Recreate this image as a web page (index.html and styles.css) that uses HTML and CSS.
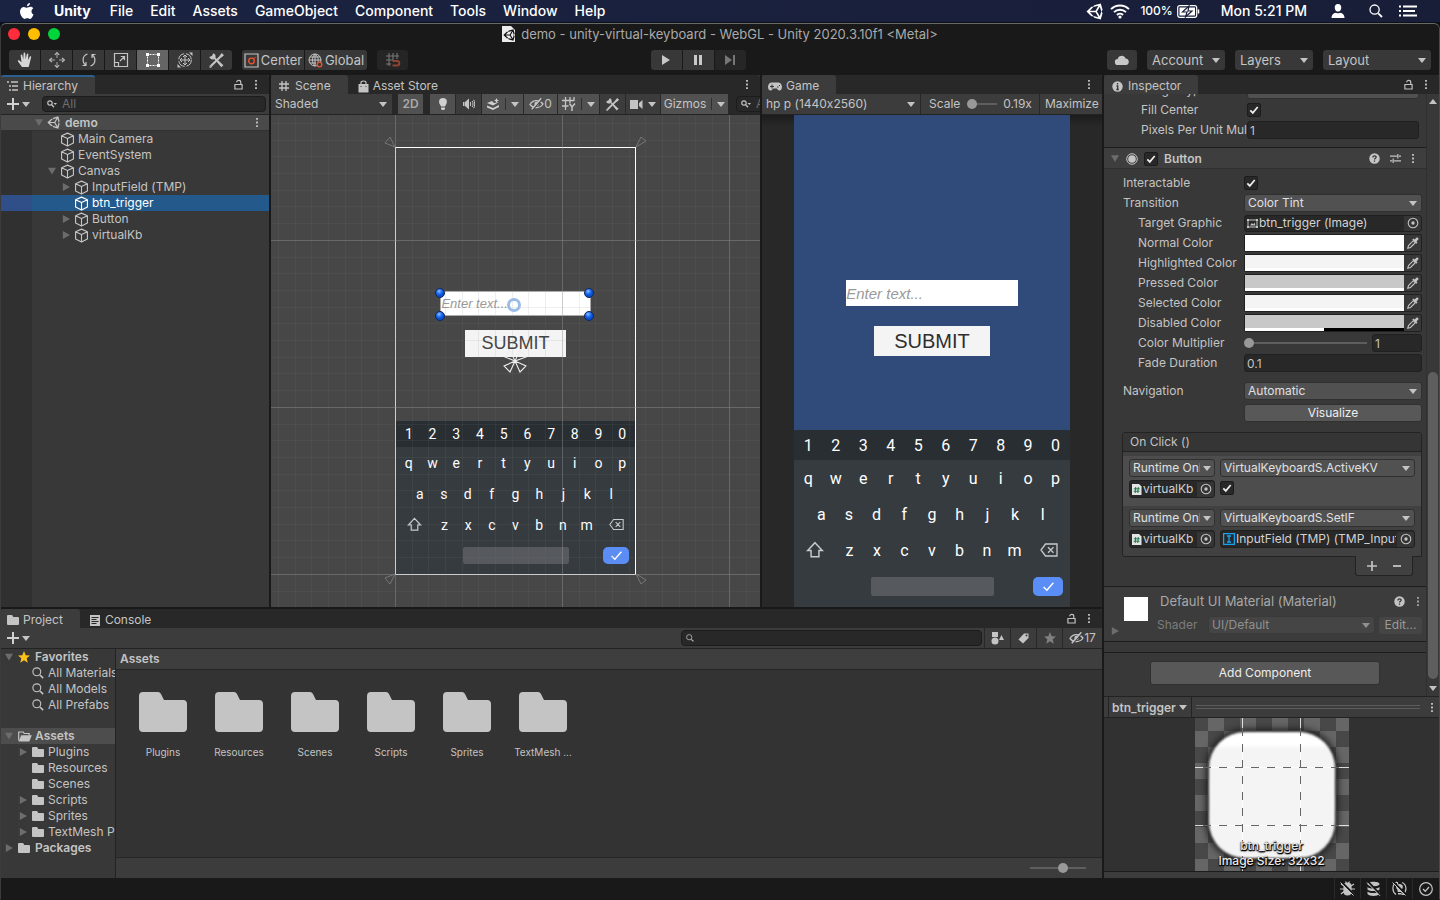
FILE: index.html
```html
<!DOCTYPE html>
<html lang="en">
<head>
<meta charset="utf-8">
<title>demo - unity-virtual-keyboard - WebGL - Unity 2020.3.10f1 &lt;Metal&gt;</title>
<link rel="stylesheet" href="styles.css">
</head>
<body>
<svg class="sprite" aria-hidden="true">
  <symbol id="cube" viewBox="0 0 16 16"><path d="M8 1.200 14.300 4v7.800L8 15 1.700 11.800V4zM1.700 4 8 7l6.300-3M8 7v8" fill="none" stroke="currentColor" stroke-width="1.200" stroke-linejoin="round"/></symbol>
  <symbol id="unity" viewBox="0 0 512 512"><path fill="currentColor" fill-rule="evenodd" d="M498.100 206.400 445.300 14.700 248.200 66.100 219 116.100l-59.200-.4L15.500 256l144.300 140.300 59.200-.4 29.200 50 197.100 51.400 52.800-191.600-30-49.700zM223.800 124.200l150.700-37.700L288 232.300H114.900zM223.800 387.800 114.900 279.700H288l86.500 145.800zM416.800 401.800 330.200 256l86.600-145.800L458.600 256z"/></symbol>
  <symbol id="kebab" viewBox="0 0 4 12"><path d="M1 1h2v2H1zM1 5h2v2H1zM1 9h2v2H1z" fill="currentColor"/></symbol>
  <symbol id="lock" viewBox="0 0 10 12"><path d="M1 6h8v5H1zM3 3.500C3 .8 7.500.8 7.500 3.500V6" fill="none" stroke="currentColor" stroke-width="1.300"/></symbol>
  <symbol id="plus" viewBox="0 0 12 12"><path d="M6 0v12M0 6h12" stroke="currentColor" stroke-width="2"/></symbol>
  <symbol id="search" viewBox="0 0 14 14"><path d="M9.300 9.300 13 13" stroke="currentColor" stroke-width="1.800"/><circle cx="5.600" cy="5.600" r="4.600" fill="none" stroke="currentColor" stroke-width="1.300"/></symbol>
  <symbol id="searchdd" viewBox="0 0 10 8"><circle cx="3" cy="3" r="2.200" fill="none" stroke="currentColor" stroke-width="1.200"/><path d="M4.600 4.600 7 7.200" stroke="currentColor" stroke-width="1.400"/><path d="M6.500 3H10L8.200 5z" fill="currentColor"/></symbol>
  <symbol id="folder" viewBox="0 0 48 40"><path d="M0 4a4 4 0 0 1 4-4h15q2 0 3 2l3 6h19a4 4 0 0 1 4 4v24a4 4 0 0 1-4 4H4a4 4 0 0 1-4-4z" fill="currentColor"/></symbol>
  <symbol id="folderopen" viewBox="0 0 14 11"><path d="M.7 9.500V1h4.500l1 1.500h5V4.500" fill="none" stroke="currentColor" stroke-width="1.200"/><path d="M3.200 4.200h10.600L11.300 10.500H.700z" fill="currentColor"/></symbol>
  <symbol id="eye" viewBox="0 0 15 12"><path d="M1 6.500C4 1.500 10.500 1.500 14 6c-3 4.500-9.500 5-13 .5z" fill="none" stroke="currentColor" stroke-width="1.300"/><circle cx="7.500" cy="6" r="2.200" fill="currentColor"/><path d="M13.500.5 4 11.500" stroke="#3c3c3c" stroke-width="1.200"/><path d="M12.300.3 2.800 11.300" stroke="currentColor" stroke-width="1.500"/></symbol>
  <symbol id="tools" viewBox="0 0 16 16"><path d="m2.500 13.500 11-11" stroke="currentColor" stroke-width="2"/><path d="M5 1.200 3.800 3.500 1.300 4.800C1.800 7 4.500 7.600 6 6.500l6.500 7.800 2-1.800L7 5.500C7.500 3.500 7 1.800 5 1.200z" fill="currentColor"/><path d="m13 1 2 2-2.500 2.200L11 3.600zM1.500 12.500l2 2-2 .5z" fill="currentColor"/></symbol>
  <symbol id="check" viewBox="0 0 10 10"><path d="m1.300 5.300 2.500 2.600L8.700 2" fill="none" stroke="currentColor" stroke-width="1.700"/></symbol>
  <symbol id="help" viewBox="0 0 12 12"><circle cx="6" cy="6" r="5.700" fill="#c4c4c4"/><path d="M4.200 4.800C4.200 2.400 8 2.500 7.800 4.700 7.700 5.800 6 5.700 6 7.200M6 8.200v1.400" fill="none" stroke="#333" stroke-width="1.400"/></symbol>
  <symbol id="sliders" viewBox="0 0 12 12"><path d="M0 3.500h7.500M9.500 3.500H12M8.500 1v5M0 8.500h2.500M4.500 8.500H12M3.500 6v5" stroke="currentColor" stroke-width="1.300"/></symbol>
  <symbol id="target" viewBox="0 0 12 12"><circle cx="6" cy="6" r="4.800" fill="none" stroke="currentColor" stroke-width="1.100"/><circle cx="6" cy="6" r="1.700" fill="currentColor"/></symbol>
  <symbol id="dropper" viewBox="0 0 12 12"><path d="M.800 11.200 1.500 8.500l4.800-4.800 2 2L3.500 10.500z" fill="none" stroke="currentColor" stroke-width="1.100"/><path d="m5.300 2.700 1.200-1.200 1 1L9.300.9C10.500-.2 12.200 1.500 11.100 2.700L9.500 4.500l1 1-1.200 1.200z" fill="currentColor"/></symbol>
  <symbol id="script" viewBox="0 0 10 11"><path d="M0 0h7l2.500 2.500V11H0z" fill="#e4e4e4"/><path d="M3.700 3 3.200 9M6.300 3l-.5 6M1.800 4.800h5.900M1.600 7.200h5.900" stroke="#1d7a4a" stroke-width="1"/></symbol>
  <symbol id="shift" viewBox="0 0 16 16"><path d="m8 1.500 6.500 7H11.500V14h-7V8.500h-3z" fill="none" stroke="currentColor" stroke-width="1.300"/></symbol>
  <symbol id="back" viewBox="0 0 18 14"><path d="M5.500 1H17v12H5.500L1 7zM8 4.200l5.500 5.600M13.500 4.200 8 9.800" fill="none" stroke="currentColor" stroke-width="1.300"/></symbol>
  <symbol id="star" viewBox="0 0 12 12"><path d="m6 0 1.700 4.200 4.300.3-3.300 2.800 1 4.400L6 9.300l-3.700 2.400 1-4.400L0 4.500l4.300-.3z" fill="currentColor"/></symbol>
</svg>

<header class="menubar">
  <svg class="apple" viewBox="0 0 14 16"><path d="M10 0c.1 1.500-1.300 3.200-3 3.200C6.800 1.700 8.400.1 10 0zM13.500 11.500C12.700 13.500 11.500 15.800 10 15.900c-1.100 0-1.500-.7-2.800-.7s-1.800.7-2.800.7C2.500 15.900 0 11.800 0 8.600c0-3 2-4.700 3.900-4.700 1.300 0 2.300.8 3.100.8.800 0 2-.9 3.600-.9 1 0 2 .5 2.700 1.500-2.600 1.600-2.200 5 .2 6.200z" fill="#fff"/></svg>
  <nav>
    <a href="#" class="app">Unity</a><a href="#">File</a><a href="#">Edit</a><a href="#">Assets</a><a href="#">GameObject</a><a href="#">Component</a><a href="#">Tools</a><a href="#">Window</a><a href="#">Help</a>
  </nav>
  <div class="tray">
    <svg width="17" height="17"><use href="#unity"/></svg>
    <svg class="wifi" width="20" height="15" viewBox="0 0 20 15"><path d="M1 5.200C6 .2 14 .2 19 5.200M4 8.200c3.300-3.300 8.700-3.300 12 0M7 11c1.700-1.600 4.300-1.600 6 0" fill="none" stroke="#fff" stroke-width="1.900"/><circle cx="10" cy="13" r="1.600" fill="#fff"/></svg>
    <span class="pct">100%</span>
    <svg class="batt" width="23" height="13" viewBox="0 0 23 13"><rect x=".7" y=".7" width="19" height="11.600" rx="2" fill="none" stroke="#fff" stroke-width="1.200"/><path d="M21.500 4.500v4" stroke="#fff" stroke-width="1.500"/><path d="M2.500 2.500h15.500v8H2.500z" fill="#fff"/><path d="M12 1 5.500 7H10L8.500 12 15 6h-4z" fill="#fff" stroke="#1a2039" stroke-width="1.200"/></svg>
    <span class="clock">Mon 5:21 PM</span>
    <svg class="user" width="14" height="14" viewBox="0 0 14 14"><path d="M7 0C9.500 0 10.500 2 10.200 4.200 10 6.500 8.500 7.600 7 7.600S4 6.500 3.800 4.200C3.500 2 4.500 0 7 0zM.5 14c0-3 1.500-4.800 4.500-5.300 1.200.8 2.800.8 4 0 3 .5 4.500 2.300 4.500 5.300z" fill="#fff"/></svg>
    <svg class="find" width="14" height="14"><use href="#search"/></svg>
    <svg width="18" height="12" viewBox="0 0 18 12"><path d="M0 1.500h2M4 1.500h14M0 6h2M4 6h12M0 10.500h2M4 10.500h14" stroke="#fff" stroke-width="1.800"/></svg>
  </div>
</header>

<div class="window">
  <div class="titlebar">
    <div class="lights"><i class="red"></i><i class="yellow"></i><i class="green"></i></div>
    <h1><svg width="13" height="16" viewBox="0 0 13 16"><path d="M0 0h9l4 4v12H0z" fill="#ececec"/><use href="#unity" x="1" y="3" width="12" height="12" color="#111"/></svg>demo - unity-virtual-keyboard - WebGL - Unity 2020.3.10f1 &lt;Metal&gt;</h1>
  </div>

  <div class="toolbar">
    <div class="modes">
      <div class="btns">
        <button aria-label="Hand"><svg width="16" height="16" viewBox="0 0 16 16"><path d="M5 15 1 9.500C.3 8.300 1.800 7.800 2.500 8.500L4.500 10.300 3.700 3.500C3.600 2.200 5 2.200 5.300 3.300L6.300 7.500 6.600 1.500C6.700.3 8.200.3 8.300 1.500L8.600 7.300 9.800 2.300C10.100 1.200 11.400 1.400 11.300 2.600L11 8 12.700 4.800C13.300 3.800 14.500 4.400 14.100 5.500L11.700 15z" fill="#d6d6d6"/></svg></button>
        <button aria-label="Move"><svg width="16" height="16" viewBox="0 0 16 16"><path d="M8 2v4M8 10v4M2 8h4M10 8h4" stroke="#aaa" stroke-width="1"/><path d="M5.800 3 8 .6 10.200 3M5.800 13 8 15.400 10.200 13M3 5.800.6 8 3 10.200M13 5.800 15.400 8 13 10.200" fill="none" stroke="#c4c4c4" stroke-width="1.100"/></svg></button>
        <button aria-label="Rotate"><svg width="16" height="16" viewBox="0 0 16 16"><path d="M6.500 2C1.500 3.500.500 9.500 4.800 13.300M1.500 13.500H5V10M9.500 14c5-1.500 6-7.500 1.700-11.300M14.500 2.500H11V6" fill="none" stroke="#c4c4c4" stroke-width="1.200"/></svg></button>
        <button aria-label="Scale"><svg width="16" height="16" viewBox="0 0 16 16"><path d="M1.500 1.500h13v13h-13zM1.500 10.500h4v4M7 9l4.500-4.500M7.800 4.500h3.700V8.200" fill="none" stroke="#c4c4c4" stroke-width="1.200"/></svg></button>
        <button class="on" aria-label="Rect"><svg width="16" height="16" viewBox="0 0 16 16"><path d="M4.500 2.500h7M4.500 13.500h7M2.500 4.500v7M13.500 4.500v7" stroke="#fff" stroke-width="1" stroke-dasharray="2 1"/><path d="M1 1h3v3H1zM12 1h3v3h-3zM1 12h3v3H1zM12 12h3v3h-3z" fill="#fff"/></svg></button>
        <button aria-label="Transform"><svg width="16" height="16" viewBox="0 0 16 16"><circle cx="8" cy="8" r="6.300" fill="none" stroke="#c4c4c4" stroke-dasharray="8 2"/><path d="M8 3v10M3 8h10M6 5l2-2 2 2M6 11l2 2 2-2M5 6 3 8l2 2M11 6l2 2-2 2" fill="none" stroke="#c4c4c4"/><path d="M12 .5h3.500V4zM.5 12v3.500H4z" fill="#c4c4c4"/></svg></button>
        <button aria-label="Custom tools"><svg width="17" height="17"><use href="#tools"/></svg></button>
      </div>
      <div class="btns pivots">
        <button><svg width="15" height="15" viewBox="0 0 15 15"><path d="M1 1h13v13H1z" fill="none" stroke="#c4c4c4" stroke-width="1.200"/><circle cx="7.500" cy="8" r="2.800" fill="none" stroke="#f0552e" stroke-width="1.300"/><path d="m9.500 6 2.300-2.300" stroke="#f0552e"/></svg>Center</button>
        <button><svg width="15" height="15" viewBox="0 0 15 15"><circle cx="7" cy="7" r="6" fill="none" stroke="#c4c4c4"/><path d="M7 1C3.500 4 3.500 10 7 13M7 1c3.500 3 3.500 6 3 8M1 7h12M2 4h10M2 10h6M7 1v12" fill="none" stroke="#c4c4c4"/><circle cx="11.500" cy="11.500" r="2.300" fill="#383838" stroke="#f0552e" stroke-width="1.300"/></svg>Global</button>
      </div>
      <button class="snap" aria-label="Grid snapping"><svg width="16" height="16" viewBox="0 0 16 16"><path d="M4 1v13M8 1v7M12 1v6M1 4h13M1 8h7M1 12h5" stroke="#777" stroke-width="1.100"/><path d="M7.500 9H12a2.200 2.200 0 0 1 0 4.500H7.500" fill="none" stroke="#8c4433" stroke-width="2"/></svg></button>
    </div>
    <div class="btns play">
      <button aria-label="Play"><svg width="12" height="12" viewBox="0 0 12 12"><path d="M2 1v10l8-5z" fill="#c8c8c8"/></svg></button>
      <button aria-label="Pause"><svg width="12" height="12" viewBox="0 0 12 12"><path d="M2 1h3v10H2zM7 1h3v10H7z" fill="#c8c8c8"/></svg></button>
      <button class="off" aria-label="Step"><svg width="12" height="12" viewBox="0 0 12 12"><path d="M1 1v10l7-5zM9 1h2v10H9z" fill="#777"/></svg></button>
    </div>
    <div class="account">
      <button class="cloud" aria-label="Cloud"><svg width="16" height="12" viewBox="0 0 16 12"><path d="M4 11a3 3 0 0 1-.3-6C4.500 1 10.500.5 11.500 4.500c4.500.2 4.200 6.500.5 6.500z" fill="#c8c8c8"/></svg></button>
      <span class="dd dark"><select aria-label="Account"><option>Account</option></select></span>
      <span class="dd dark"><select aria-label="Layers"><option>Layers</option></select></span>
      <span class="dd dark wide"><select aria-label="Layout"><option>Layout</option></select></span>
    </div>
  </div>

  <main class="dock">
    <div class="left">
      <div class="upper">
        <section class="panel hierarchy">
          <div class="tabs"><button class="tab active focus tight"><svg width="12" height="10" viewBox="0 0 12 10"><path d="M0 1h2M4 1h7M2 5h2M5 5h6M2 9h2M5 9h6" stroke="currentColor" stroke-width="1.300"/></svg>Hierarchy</button><span class="end"><svg width="9" height="11"><use href="#lock"/></svg><svg width="4" height="11"><use href="#kebab"/></svg></span></div>
          <div class="bar"><button class="add" aria-label="Create"><svg width="12" height="12"><use href="#plus"/></svg><i class="caret"></i></button><label class="searchbox"><svg width="10" height="8"><use href="#searchdd"/></svg><input type="text" placeholder="All" aria-label="Search hierarchy"></label></div>
          <ul class="tree">
            <li class="scene-row"><i class="gut"></i><i class="tri open"></i><svg width="13" height="13"><use href="#unity"/></svg><b>demo</b><svg class="more" width="4" height="11"><use href="#kebab"/></svg></li>
            <li class="d1"><i class="gut"></i><i class="tri none"></i><svg width="15" height="15"><use href="#cube"/></svg>Main Camera</li>
            <li class="d1"><i class="gut"></i><i class="tri none"></i><svg width="15" height="15"><use href="#cube"/></svg>EventSystem</li>
            <li class="d1"><i class="gut"></i><i class="tri open"></i><svg width="15" height="15"><use href="#cube"/></svg>Canvas</li>
            <li class="d2"><i class="gut"></i><i class="tri"></i><svg width="15" height="15"><use href="#cube"/></svg>InputField (TMP)</li>
            <li class="d2 sel"><i class="gut"></i><i class="tri none"></i><svg width="15" height="15"><use href="#cube"/></svg>btn_trigger</li>
            <li class="d2"><i class="gut"></i><i class="tri"></i><svg width="15" height="15"><use href="#cube"/></svg>Button</li>
            <li class="d2"><i class="gut"></i><i class="tri"></i><svg width="15" height="15"><use href="#cube"/></svg>virtualKb</li>
            <li class="rest"><i class="gut"></i></li>
          </ul>
        </section>

        <section class="panel scene">
          <div class="tabs"><button class="tab active"><svg width="12" height="12" viewBox="0 0 12 12"><path d="M4 1v10M8 1v10M1 4h10M1 8h10" stroke="currentColor" stroke-width="1.300"/></svg>Scene</button><button class="tab next"><svg width="11" height="13" viewBox="0 0 11 13"><path d="M.5 4h10v8.500H.5z" fill="currentColor"/><path d="M3 5V2.500C3 .5 8 .5 8 2.500V5" fill="none" stroke="currentColor" stroke-width="1.200"/><path d="M2.500 6.500h1M7.500 6.500h1" stroke="#333" stroke-width="1.200"/></svg>Asset Store</button><span class="end"><svg width="4" height="11"><use href="#kebab"/></svg></span></div>
          <div class="bar scenebar">
            <span class="dd flat shaded"><select aria-label="Draw mode"><option>Shaded</option></select></span>
            <button class="on w25 two">2D</button>
            <button class="on w25 light" aria-label="Lighting"><svg width="10" height="14" viewBox="0 0 10 14"><path d="M5 1C9.500 1 9.500 5.500 8 7.500L7 9.500H3L2 7.500C.5 5.500.5 1 5 1zM3 10.500h4V12L6 13H4l-1-1z" fill="#d0d0d0"/></svg></button>
            <button class="w25" aria-label="Audio"><svg width="13" height="12" viewBox="0 0 13 12"><path d="M1 4v4h1.500V4zM3 4l4-3.500v11L3 8z" fill="currentColor"/><path d="M8.500 4v4M10.200 3c1 1.800 1 4.200 0 6M11.700 1.800c1.300 2.500 1.300 5.900 0 8.400" fill="none" stroke="currentColor"/></svg></button>
            <button class="on w41" aria-label="Effects"><svg width="13" height="12" viewBox="0 0 13 12"><path d="M0 5l5-2 2 2 5-1-6 3.500zM0 7.500l6 2.500 6-3V9l-6 3-6-2.500zM9.500 0l.8 1.700L12 2.500l-1.700.8-.8 1.700-.8-1.700L7 2.500l1.700-.8z" fill="#d0d0d0"/></svg><i class="vr"></i><i class="caret"></i></button>
            <button class="on w33" aria-label="Hidden objects"><svg width="15" height="12"><use href="#eye"/></svg>0</button>
            <button class="on w41" aria-label="Grid"><svg width="14" height="14" viewBox="0 0 14 14"><path d="M3.500 0v13M8 0v6M0 3.500h12M0 9h6.500M12 0v4" stroke="currentColor" stroke-width="1.300"/><path d="M7.500 6.500 10 10l3-3.500M10 10v4" fill="none" stroke="currentColor" stroke-width="1.500"/></svg><i class="vr"></i><i class="caret"></i></button>
            <button class="w25" aria-label="Tools"><svg width="15" height="15"><use href="#tools"/></svg></button>
            <button class="w34" aria-label="Camera"><svg width="13" height="9" viewBox="0 0 13 9"><path d="M0 0h8v9H0zM9 3l3.500-3v9L9 6z" fill="currentColor"/></svg><i class="caret"></i></button>
            <button class="on giz">Gizmos<i class="vr"></i><i class="caret"></i></button>
            <label class="searchbox"><svg width="10" height="8"><use href="#searchdd"/></svg><input type="text" placeholder="All" aria-label="Search scene"></label>
          </div>
          <div class="viewport">
            <div class="frame">
              <input class="field" type="text" placeholder="Enter text..." aria-label="Scene text field">
              <button class="submit">SUBMIT</button>
              <div class="kb">
                <div class="row nums"><button>1</button><button>2</button><button>3</button><button>4</button><button>5</button><button>6</button><button>7</button><button>8</button><button>9</button><button>0</button></div>
                <div class="row"><button>q</button><button>w</button><button>e</button><button>r</button><button>t</button><button>y</button><button>u</button><button>i</button><button>o</button><button>p</button></div>
                <div class="row mid"><button>a</button><button>s</button><button>d</button><button>f</button><button>g</button><button>h</button><button>j</button><button>k</button><button>l</button></div>
                <div class="row"><button class="mod" aria-label="Shift"><svg><use href="#shift"/></svg></button><button>z</button><button>x</button><button>c</button><button>v</button><button>b</button><button>n</button><button>m</button><button class="mod" aria-label="Backspace"><svg><use href="#back"/></svg></button></div>
                <div class="row last"><button class="space" aria-label="Space"></button><button class="ok" aria-label="Done"><svg viewBox="0 0 12 12"><path d="m1.500 6.500 3 3 6-7" fill="none" stroke="#fff" stroke-width="1.300"/></svg></button></div>
              </div>
            </div>
            <svg class="overlay" width="100%" height="100%">
              <defs>
                <pattern id="grid" x="124" y="125" width="167" height="167" patternUnits="userSpaceOnUse">
                  <path d="M17.500 0v167M33.500 0v167M50.500 0v167M67.500 0v167M83.500 0v167M100.500 0v167M117.500 0v167M133.500 0v167M150.500 0v167M0 17.500h167M0 33.500h167M0 50.500h167M0 67.500h167M0 83.500h167M0 100.500h167M0 117.500h167M0 133.500h167M0 150.500h167" stroke="#808080" stroke-opacity=".12"/>
                  <path d="M.5 0v167M0 .5h167" stroke="#909090" stroke-opacity=".45"/>
                </pattern>
                <radialGradient id="knob" cx=".4" cy=".3"><stop offset="0" stop-color="#8fc0ff"/><stop offset=".6" stop-color="#1f6cf0"/><stop offset="1" stop-color="#0a4fd0"/></radialGradient>
              </defs>
              <rect width="100%" height="100%" fill="url(#grid)"/>
              <g fill="none" stroke="#777"><path d="M124 32l-10-4 5-6zM365 32l5-10 5 4zM124 459l-10 4 5 6zM365 459l5 10 5-4z"/></g>
              <g fill="none" stroke="#eee" stroke-width="1.100"><path d="M244 246l-10-4 5-7zM244 246l5-11 6 7zM244 246l-11 5 6 6zM244 246l5 11 6-6z"/></g>
              <rect x="169.500" y="176.500" width="150" height="24" fill="none" stroke="#aaa"/>
              <g fill="url(#knob)" stroke="#10275c"><circle cx="169" cy="178" r="4.500"/><circle cx="318" cy="178" r="4.500"/><circle cx="169" cy="201" r="4.500"/><circle cx="318" cy="201" r="4.500"/></g>
              <circle cx="243" cy="190" r="5.500" fill="none" stroke="#9bbbe8" stroke-width="3"/>
            </svg>
          </div>
        </section>

        <section class="panel game">
          <div class="tabs"><button class="tab active tight"><svg width="14" height="9" viewBox="0 0 14 9"><path d="M4 .5h6c5 0 5 8 1.500 8-2 0-2-2-3-2h-3c-1 0-1 2-3 2C-1 8.500-1 .5 4 .5z" fill="currentColor"/><path d="M4 2.500v4M2 4.500h4M9 5h1.500M11 3.500h1" stroke="#3a3a3a" stroke-width="1.100"/></svg>Game</button><span class="end"><svg width="4" height="11"><use href="#kebab"/></svg></span></div>
          <div class="bar gamebar">
            <span class="dd flat"><select aria-label="Resolution"><option>hp p (1440x2560)</option></select></span>
            <label class="scale">Scale<input type="range" min="0" max="100" value="0"><output>0.19x</output></label>
            <button class="max">Maximize On Play</button>
          </div>
          <div class="stage">
            <div class="device">
              <input class="field" type="text" placeholder="Enter text..." aria-label="Game text field">
              <button class="submit">SUBMIT</button>
              <div class="kb">
                <div class="row nums"><button>1</button><button>2</button><button>3</button><button>4</button><button>5</button><button>6</button><button>7</button><button>8</button><button>9</button><button>0</button></div>
                <div class="row"><button>q</button><button>w</button><button>e</button><button>r</button><button>t</button><button>y</button><button>u</button><button>i</button><button>o</button><button>p</button></div>
                <div class="row mid"><button>a</button><button>s</button><button>d</button><button>f</button><button>g</button><button>h</button><button>j</button><button>k</button><button>l</button></div>
                <div class="row"><button class="mod" aria-label="Shift"><svg><use href="#shift"/></svg></button><button>z</button><button>x</button><button>c</button><button>v</button><button>b</button><button>n</button><button>m</button><button class="mod" aria-label="Backspace"><svg><use href="#back"/></svg></button></div>
                <div class="row last"><button class="space" aria-label="Space"></button><button class="ok" aria-label="Done"><svg viewBox="0 0 12 12"><path d="m1.500 6.500 3 3 6-7" fill="none" stroke="#fff" stroke-width="1.300"/></svg></button></div>
              </div>
            </div>
          </div>
        </section>
      </div>

      <section class="panel project">
        <div class="tabs"><button class="tab active tight"><svg width="12" height="10" viewBox="0 0 48 40" preserveAspectRatio="none"><use href="#folder"/></svg>Project</button><button class="tab next wide"><svg width="10" height="11" viewBox="0 0 10 11"><path d="M0 0h10v11H0z" fill="currentColor"/><path d="M1.500 2.500h7M1.500 4.500h5M1.500 6.500h7M1.500 8.500h5" stroke="#282828"/></svg>Console</button><span class="end"><svg width="9" height="11"><use href="#lock"/></svg><svg width="4" height="11"><use href="#kebab"/></svg></span></div>
        <div class="bar projbar"><button class="add" aria-label="Create asset"><svg width="12" height="12"><use href="#plus"/></svg><i class="caret"></i></button>
          <label class="searchbox"><svg width="8" height="8" viewBox="0 0 14 14"><use href="#search"/></svg><input type="text" aria-label="Search assets"></label>
          <button class="filter" aria-label="Filter by type"><svg width="13" height="13" viewBox="0 0 13 13"><path d="M1 0h6v5H1zM8 8l2.500-5L13 8z" fill="currentColor"/><circle cx="4" cy="9" r="3.500" fill="currentColor"/></svg></button>
          <button class="filter" aria-label="Filter by label"><svg width="11" height="11" viewBox="0 0 11 11"><path d="M6 .5h4.500V5L5 10.500.5 6.500z" fill="currentColor"/><circle cx="8.500" cy="2.500" r="1" fill="#3c3c3c"/></svg></button>
          <button class="filter dim" aria-label="Favorite"><svg width="12" height="12"><use href="#star"/></svg></button>
          <button class="hidden17"><svg width="15" height="12"><use href="#eye"/></svg>17</button>
        </div>
        <div class="projbody">
          <ul class="tree ptree">
            <li><i class="tri open"></i><svg class="fav" width="12" height="12"><use href="#star"/></svg><b>Favorites</b></li>
            <li class="q"><svg width="12" height="12"><use href="#search"/></svg>All Materials</li>
            <li class="q"><svg width="12" height="12"><use href="#search"/></svg>All Models</li>
            <li class="q"><svg width="12" height="12"><use href="#search"/></svg>All Prefabs</li>
            <li class="gap"></li>
            <li class="cur"><i class="tri open"></i><svg width="14" height="11"><use href="#folderopen"/></svg><b>Assets</b></li>
            <li class="p1"><i class="tri"></i><svg width="12" height="10"><use href="#folder"/></svg>Plugins</li>
            <li class="p1"><i class="tri none"></i><svg width="12" height="10"><use href="#folder"/></svg>Resources</li>
            <li class="p1"><i class="tri none"></i><svg width="12" height="10"><use href="#folder"/></svg>Scenes</li>
            <li class="p1"><i class="tri"></i><svg width="12" height="10"><use href="#folder"/></svg>Scripts</li>
            <li class="p1"><i class="tri"></i><svg width="12" height="10"><use href="#folder"/></svg>Sprites</li>
            <li class="p1"><i class="tri"></i><svg width="12" height="10"><use href="#folder"/></svg>TextMesh Pro</li>
            <li><i class="tri"></i><svg width="12" height="10"><use href="#folder"/></svg><b>Packages</b></li>
          </ul>
          <div class="files">
            <div class="crumb">Assets</div>
            <ul class="grid">
              <li><svg><use href="#folder"/></svg>Plugins</li><li><svg><use href="#folder"/></svg>Resources</li><li><svg><use href="#folder"/></svg>Scenes</li><li><svg><use href="#folder"/></svg>Scripts</li><li><svg><use href="#folder"/></svg>Sprites</li><li><svg><use href="#folder"/></svg>TextMesh ...</li>
            </ul>
            <div class="foot"><input type="range" min="0" max="100" value="60" aria-label="Icon size"></div>
          </div>
        </div>
      </section>
    </div>

    <section class="panel inspector">
      <div class="tabs"><button class="tab active info"><svg width="11" height="11" viewBox="0 0 11 11"><circle cx="5.500" cy="5.500" r="5.200" fill="currentColor"/><path d="M5.500 2v1.500M4.500 5h1.200v3.500M4.300 8.500h2.500" stroke="#333" stroke-width="1.300" fill="none"/></svg>Inspector</button><span class="end"><svg width="9" height="11"><use href="#lock"/></svg><svg width="4" height="11"><use href="#kebab"/></svg></span></div>
      <div class="scroller">
        <div class="props">
          <div class="image-part">
            <div class="prop"><label for="itype">Image Type</label><span class="dd"><select id="itype"><option></option></select></span></div>
            <div class="prop"><label for="fillc">Fill Center</label><span class="tick"><input id="fillc" type="checkbox" checked><svg><use href="#check"/></svg></span></div>
            <div class="prop"><label for="ppu">Pixels Per Unit Multiplier</label><input id="ppu" class="txt" type="text" value="1"></div>
          </div>
          <div class="comp-head"><i class="tri open"></i><svg width="12" height="12" viewBox="0 0 12 12"><circle cx="6" cy="6" r="5.300" fill="none" stroke="#c4c4c4"/><circle cx="6" cy="6" r="3.800" fill="#c4c4c4"/></svg><span class="tick"><input type="checkbox" checked aria-label="Button enabled"><svg><use href="#check"/></svg></span><b>Button</b><svg class="push" width="11" height="11"><use href="#help"/></svg><svg width="11" height="11"><use href="#sliders"/></svg><svg width="4" height="11"><use href="#kebab"/></svg></div>
          <div class="button-part">
            <div class="prop"><label for="inter">Interactable</label><span class="tick"><input id="inter" type="checkbox" checked><svg><use href="#check"/></svg></span></div>
            <div class="prop"><label for="trans">Transition</label><span class="dd"><select id="trans"><option>Color Tint</option></select></span></div>
            <div class="prop in"><span>Target Graphic</span><span class="obj"><svg width="11" height="9" viewBox="0 0 11 9"><path d="M2 1h7M2 8h7M1 2v5M10 2v5" stroke="currentColor" stroke-width="1"/><path d="M0 0h2v2H0zM9 0h2v2H9zM0 7h2v2H0zM9 7h2v2H9zM3 6.500 4.800 4l1.400 1.500L7.500 3.500 8.500 6.500z" fill="currentColor"/></svg><em>btn_trigger (Image)</em><button aria-label="Pick target graphic"><svg width="12" height="12"><use href="#target"/></svg></button></span></div>
            <div class="prop in"><span>Normal Color</span><span class="color"><i class="sw white"></i><button aria-label="Pick normal"><svg width="12" height="12"><use href="#dropper"/></svg></button></span></div>
            <div class="prop in"><span>Highlighted Color</span><span class="color"><i class="sw pale"></i><button aria-label="Pick highlighted"><svg width="12" height="12"><use href="#dropper"/></svg></button></span></div>
            <div class="prop in"><span>Pressed Color</span><span class="color"><i class="sw gray"></i><button aria-label="Pick pressed"><svg width="12" height="12"><use href="#dropper"/></svg></button></span></div>
            <div class="prop in"><span>Selected Color</span><span class="color"><i class="sw pale"></i><button aria-label="Pick selected"><svg width="12" height="12"><use href="#dropper"/></svg></button></span></div>
            <div class="prop in"><span>Disabled Color</span><span class="color"><i class="sw gray half"></i><button aria-label="Pick disabled"><svg width="12" height="12"><use href="#dropper"/></svg></button></span></div>
            <div class="prop in"><label for="mult">Color Multiplier</label><span class="mult"><input id="mult" type="range" min="1" max="5" value="1"><input class="txt" type="text" value="1" aria-label="Multiplier value"></span></div>
            <div class="prop in"><label for="fade">Fade Duration</label><input id="fade" class="txt" type="text" value="0.1"></div>
            <div class="prop nav"><label for="nav">Navigation</label><span class="dd"><select id="nav"><option>Automatic</option></select></span></div>
            <div class="prop visual"><span></span><button class="raised">Visualize</button></div>
            <div class="events">
              <div class="ev-head">On Click ()</div>
              <div class="ev lit">
                <span class="dd short"><select aria-label="Call state 1"><option>Runtime Only</option></select></span>
                <span class="dd"><select aria-label="Function 1"><option>VirtualKeyboardS.ActiveKV</option></select></span>
                <span class="obj"><svg width="10" height="11"><use href="#script"/></svg><em>virtualKb</em><button aria-label="Pick object 1"><svg width="12" height="12"><use href="#target"/></svg></button></span>
                <span class="tick"><input type="checkbox" checked aria-label="Argument"><svg><use href="#check"/></svg></span>
              </div>
              <div class="ev">
                <span class="dd short"><select aria-label="Call state 2"><option>Runtime Only</option></select></span>
                <span class="dd"><select aria-label="Function 2"><option>VirtualKeyboardS.SetIF</option></select></span>
                <span class="obj"><svg width="10" height="11"><use href="#script"/></svg><em>virtualKb</em><button aria-label="Pick object 2"><svg width="12" height="12"><use href="#target"/></svg></button></span>
                <span class="obj field-ref"><svg width="12" height="12" viewBox="0 0 12 12"><path d="M.6.6h10.800v10.800H.6zM4 3h4M4 9h4M6 3v6" fill="none" stroke="#16a4f0" stroke-width="1.300"/></svg><em>InputField (TMP) (TMP_Input</em><button aria-label="Pick argument"><svg width="12" height="12"><use href="#target"/></svg></button></span>
              </div>
            </div>
            <div class="ev-foot"><button aria-label="Add event"><svg width="10" height="10" viewBox="0 0 12 12"><use href="#plus"/></svg></button><button aria-label="Remove event"><svg width="8" height="10" viewBox="0 0 8 10"><path d="M0 5h8" stroke="currentColor" stroke-width="1.800"/></svg></button></div>
          </div>
          <div class="material">
            <i class="thumb"></i>
            <div class="mat-info">
              <div class="mat-title"><span>Default UI Material (Material)</span><svg width="11" height="11"><use href="#help"/></svg><svg width="4" height="11"><use href="#kebab"/></svg></div>
              <div class="mat-shader"><label for="shader">Shader</label><span class="dd faded"><select id="shader" disabled><option>UI/Default</option></select></span><button disabled>Edit...</button></div>
            </div>
            <i class="tri corner"></i>
          </div>
          <div class="strip"></div>
          <div class="addcomp"><button class="raised">Add Component</button></div>
        </div>
        <div class="scrollbar"><i class="caret up"></i><i class="thumb-v"></i><i class="caret"></i></div>
      </div>
      <div class="pv-head"><button>btn_trigger<i class="caret"></i></button><i class="grip"></i><svg width="4" height="11"><use href="#kebab"/></svg></div>
      <div class="preview">
        <div class="tex">
          <i class="blob"></i>
          <svg class="guides" width="154" height="153"><g fill="none" stroke="#fff" stroke-opacity=".8"><path d="M47.500 0v153M105.500 0v153M0 49.500h154M0 107.500h154"/></g><g fill="none" stroke="#666" stroke-dasharray="8 8"><path d="M47.500 10v143M105.500 10v143M8 49.500h138M8 107.500h138"/></g></svg>
          <p>btn_trigger<br>Image Size: 32x32</p>
        </div>
      </div>
      <div class="pv-foot"></div>
    </section>
  </main>

  <footer class="status">
    <button aria-label="Debugger"><svg width="15" height="15" viewBox="0 0 15 15"><path d="M4 5q0-3 3.500-3T11 5v5q0 4-3.500 4T4 10zM1 3l3 2M0 8h4M1 13l3-2.500M14 3l-3 2M15 8h-4M14 13l-3-2.500M5.500.5 7 3M9.500.5 8 3" fill="currentColor" stroke="currentColor" stroke-width="1.200"/><path d="m1 .5 14 14" stroke="#191919" stroke-width="2"/><path d="m.5 1.500 13 13" stroke="currentColor"/></svg></button>
    <button aria-label="Cache"><svg width="15" height="15" viewBox="0 0 15 15"><path d="M1.500 3c0-3 12-3 12 0s-12 3-12 0zM1.500 6c2 2 10 2 12 0v2.500c-2 2-10 2-12 0zM1.500 10.500c2 2 10 2 12 0V13c-2 2.500-10 2.500-12 0z" fill="currentColor"/><path d="m2 .5 13 14" stroke="#191919" stroke-width="2"/><path d="m1 1.500 13 13.300" stroke="currentColor"/></svg></button>
    <button aria-label="Lighting bake"><svg width="15" height="15" viewBox="0 0 15 15"><path d="M7.500 3C11.500 3 11.500 7 9.700 8.500L9.200 11H5.800l-.5-2.500C3.500 7 3.500 3 7.500 3zM6 12h3v1.500H6z" fill="currentColor"/><path d="M5 1C0 3-.5 10 4 13.500M10 1.500c5 2 5 9 1 12M1 1.500h4.500V5M14 13.500H10V10" fill="none" stroke="currentColor" stroke-width="1.200"/><path d="m1 .5 14 14" stroke="#191919" stroke-width="2"/><path d="m.5 1.500 13 13" stroke="currentColor"/></svg></button>
    <button aria-label="Ready"><svg width="14" height="14" viewBox="0 0 14 14"><circle cx="7" cy="7" r="6.300" fill="none" stroke="currentColor" stroke-width="1.200"/><path d="m4 7 2.300 2.300L10 5" fill="none" stroke="currentColor" stroke-width="1.300"/></svg></button>
  </footer>
</div>
</body>
</html>
```
FILE: styles.css
```css
* { box-sizing: border-box; }
body {
  margin: 0; min-height: 100vh; display: flex; flex-direction: column;
  background: #0c0f1c; color: #c4c4c4;
  font: 12px/16px Inter, "Liberation Sans", sans-serif;
  font-variant-ligatures: no-contextual;
}
button, input, select, output { font: inherit; font-variant-ligatures: inherit; color: inherit; margin: 0; padding: 0; border: 0; background: none; border-radius: 0; }
button { display: flex; align-items: center; justify-content: center; white-space: nowrap; }
ul { list-style: none; margin: 0; padding: 0; }
svg { display: block; flex: none; }
i, em { font-style: normal; }
b { font-weight: 600; }
a { color: inherit; text-decoration: none; }
.sprite { position: absolute; width: 0; height: 0; }

/* system menu bar */
.menubar { height: 22px; display: flex; align-items: center; padding: 0 23px 0 20px; color: #fff; background: linear-gradient(90deg, #1a2342, #191e38); font-size: 14px; font-weight: 500; }
.apple { width: 14px; height: 16px; margin-right: 20px; }
.menubar nav { display: flex; gap: 17px; }
.menubar .app { font-weight: 700; margin-right: 2px; }
.tray { margin-left: auto; display: flex; align-items: center; }
.tray .wifi { margin-left: 7px; }
.tray .pct { font-size: 12px; margin: 0 4px 0 10px; }
.tray .clock { margin: 0 24px 0 21px; }
.tray .find { margin: 0 16px 0 24px; }

/* application window */
.window { flex: 1; margin-top: 1px; display: flex; flex-direction: column; border: 1px solid; border-color: #6a6a64 #4a4a4a #191919 #3c3c3c; border-radius: 6px 6px 0 0; background: #191919; overflow: hidden; }
.titlebar { height: 21px; display: grid; grid-template-columns: 1fr auto 1fr; align-items: center; padding-bottom: 2px; }
.lights { display: flex; gap: 8px; padding-left: 7px; }
.lights i { width: 12px; height: 12px; border-radius: 50%; }
.red { background: #ff2d3c; } .yellow { background: #ffbd00; } .green { background: #00d53c; }
.titlebar h1 { margin: 0; display: flex; align-items: center; gap: 6px; font-size: 13px; font-weight: 400; color: #aaa; }
.toolbar { height: 30px; display: grid; grid-template-columns: 1fr auto 1fr; align-items: center; padding: 0 8px; font-size: 13px; }
.modes { display: flex; gap: 10px; }
.btns { display: flex; gap: 1px; border-radius: 3px; overflow: hidden; }
.btns button { height: 20px; width: 31px; background: #383838; }
.btns .on { background: #656565; }
.btns .off { background: #262626; }
.pivots button { width: 62px; gap: 2px; }
.snap { width: 31px; height: 20px; border-radius: 3px; background: #252525; }
.play { margin-right: 44px; }
.account { display: flex; gap: 10px; justify-self: end; }
.cloud { width: 30px; height: 20px; background: #383838; border-radius: 3px; }

/* drop-downs */
.dd { display: grid; min-width: 0; }
.dd select { grid-area: 1 / 1; appearance: none; width: 100%; min-width: 0; height: 18px; padding: 0 18px 1px 3px; background: #515151; border: 1px solid #303030; border-radius: 3px; color: #e0e0e0; font-size: 12px; opacity: 1; }
.dd::after { content: ""; grid-area: 1 / 1; place-self: center end; margin-right: 5px; border: 4px solid transparent; border-top: 5px solid #c4c4c4; border-bottom: 0; pointer-events: none; }
.dd.dark select { width: 78px; height: 20px; background: #383838; border: 0; color: #c4c4c4; font-size: 13px; padding: 0 0 0 5px; }
.dd.dark.wide select { width: 108px; }
.dd.flat select { height: 20px; padding: 0 18px 0 4px; background: none; border: 0; color: #c4c4c4; }
.dd.faded select { background: #454545; border-color: #3a3a3a; color: #909090; }
.dd.faded::after { border-top-color: #909090; }
.dd.short select { padding-right: 14px; }
.dd.short::after { margin-right: 4px; }
.caret { flex: none; border: 4px solid transparent; border-top: 5px solid #c4c4c4; border-bottom: 0; }
.caret.up { border-top: 0; border-bottom: 5px solid #c4c4c4; }

/* docked panels */
.dock { flex: 1; min-height: 0; display: grid; grid-template-columns: minmax(0, 1fr) 335px; gap: 2px; }
.left { min-width: 0; display: flex; flex-direction: column; gap: 2px; }
.upper { flex: 1; min-height: 0; display: grid; grid-template-columns: 268px minmax(0, 489fr) minmax(0, 340fr); gap: 2px; }
.panel { min-width: 0; min-height: 0; display: flex; flex-direction: column; background: #383838; overflow: hidden; }
.tabs { flex: none; height: 19px; display: flex; background: #282828; border-radius: 3px 3px 0 0; }
.tab { height: 19px; padding: 3px 17px 0 7px; gap: 5px; border-radius: 3px 3px 0 0; font-size: 12px; }
.tab.active { background: #3c3c3c; }
.tab.tight { padding-left: 6px; gap: 4px; }
.tab.next { padding-left: 10px; gap: 4px; }
.tab.wide { gap: 5px; }
.tab.info { padding-left: 8px; }
.tab.focus { border-top: 2px solid #2a5f8f; padding-top: 1px; }
.tabs .end { margin-left: auto; display: flex; align-items: center; gap: 11px; padding-right: 11px; }
.bar { flex: none; height: 21px; display: flex; align-items: center; background: #3c3c3c; border-bottom: 1px solid #232323; }
.add { padding: 0 8px 0 6px; gap: 3px; color: #d0d0d0; }
.searchbox { min-width: 0; flex: 1; height: 16px; display: flex; align-items: center; gap: 5px; padding: 0 4px; background: #282828; border: 1px solid #1c1c1c; border-radius: 4px; }
.searchbox input { flex: 1; min-width: 0; width: 0; outline: 0; }
.searchbox input::placeholder { color: #6e6e6e; opacity: 1; }
.hierarchy .searchbox { margin: 0 3px 0 4px; }

/* trees */
.tree { flex: 1; display: flex; flex-direction: column; font-size: 12px; }
.tree li { height: 16px; flex: none; display: flex; align-items: center; white-space: nowrap; overflow: hidden; }
.tri { flex: none; width: 8px; height: 8px; margin: 0 4px 0 1px; background: #6c6c6c; clip-path: polygon(10% 0, 100% 50%, 10% 100%); }
.tri.open { clip-path: polygon(0 10%, 100% 10%, 50% 95%); }
.tri.none { visibility: hidden; }
.gut { flex: none; width: 31px; align-self: stretch; background: #303030; margin-right: 15px; }
.hierarchy li svg { margin-right: 3px; }
.d2 .gut { margin-right: 29px; }
.tree .scene-row { background: #4a4a4a; border-bottom: 1px solid #303030; }
.scene-row .gut { background: none; margin-right: 2px; }
.scene-row b { margin-left: 2px; }
.tree .scene-row .more { margin: 0 10px 0 auto; }
.tree .rest { flex: 1; }
.sel { background: #245a8b; color: #fff; }
.sel .gut { background: #304f88; }

/* scene view */
.scenebar { overflow: hidden; background: #282828; gap: 1px; }
.scenebar > * { height: 20px; background: #3c3c3c; flex: none; }
.scenebar .on { background: #515151; }
.scenebar .shaded { width: 121px; }
.two { font-weight: 600; color: #aaa; margin: 0 6px 0 5px; }
.w25 { width: 25px; } .w33 { width: 33px; } .w34 { width: 34px; gap: 5px; } .w41 { width: 41px; gap: 5px; }
.giz { width: 67px; gap: 5px; }
.vr { width: 1px; height: 12px; background: #303030; }
.scenebar .searchbox { flex: none; width: 90px; height: 16px; margin-left: 7px; background: #282828; }
.viewport { flex: 1; position: relative; overflow: hidden; background: #474747; }
.overlay { position: absolute; inset: 0; pointer-events: none; }
.frame, .device { display: grid; justify-items: center; }
.frame { position: absolute; left: 124px; top: 32px; width: 241px; height: 428px; border: 1px solid #fff; grid-template-rows: 143px 24px 15px 27px 1fr; --key: 14px; }
.field { grid-row: 2; width: 62%; background: #fff; color: #222; font: italic 13px "Liberation Sans", Arial, sans-serif; }
.field::placeholder { color: #999; opacity: 1; }
.submit { grid-row: 4; width: 42%; background: #f4f4f4; color: #444; font: 18px "Liberation Sans", Arial, sans-serif; }
.kb { grid-row: 5; align-self: end; width: 100%; display: grid; background: #353b3f; color: #fff; font: var(--key) Roboto, sans-serif; grid-template-rows: 26px repeat(4, 31px); padding-bottom: 3px; }
.kb .row { display: flex; min-width: 0; padding: 0 1px; }
.kb .nums { background: #282e32; }
.kb .row button { flex: 2 1 0; }
.kb .row .mod { flex-grow: 3; color: #c8cacc; }
.kb .mod svg { width: 15px; height: 15px; }
.kb .row.mid { padding: 0 5%; }
.kb .row.last { align-items: center; padding: 0 6px 0 28%; justify-content: space-between; }
.kb .row .space { flex: none; width: 64%; height: 17px; border-radius: 2px; background: #56595e; }
.kb .row .ok { flex: none; width: 26px; height: 17px; border-radius: 5px; background: #5a8df5; }
.kb .ok svg { width: 13px; height: 13px; }

/* game view */
.gamebar > * { height: 20px; border-right: 1px solid #282828; }
.gamebar .dd { flex: 0 0 159px; }
.gamebar { overflow: hidden; }
.scale { flex: none; display: flex; align-items: center; gap: 7px; padding: 0 7px 0 8px; }
.scale input { width: 30px; }
.scale output { margin-left: -1px; }
.gamebar .max { flex: none; padding-left: 5px; }
.stage { flex: 1; min-height: 0; display: flex; justify-content: center; background: linear-gradient(#1c1c1c, #282828 12px); }
.device { height: 100%; aspect-ratio: 9 / 16; background: #304a7a; grid-template-rows: 165px 26px 20px 30px 1fr; --key: 16px; }
.device .field { font-size: 15px; }
.device .submit { font-size: 20px; color: #2e2e2e; }
.device .kb { grid-template-rows: 30px repeat(4, 36px); }
.device .mod svg { width: 18px; height: 18px; }
.device .row.last { padding-right: 7px; }
.device .row .space { height: 19px; }
.device .row .ok { width: 30px; height: 19px; }

/* sliders */
input[type="range"] { appearance: none; height: 10px; background: linear-gradient(#5e5e5e, #5e5e5e) center / 100% 2px no-repeat; }
input[type="range"]::-webkit-slider-thumb { appearance: none; width: 10px; height: 10px; border-radius: 50%; background: #999; }

/* project */
.project { flex: none; height: 269px; }
.projbar .searchbox { flex: 0 0 301px; margin: 0 2px 0 auto; }
.filter, .hidden17 { width: 26px; height: 20px; border-left: 1px solid #282828; }
.hidden17 { width: 40px; }
.filter.dim { color: #808080; }
.projbody { flex: 1; min-height: 0; display: grid; grid-template-columns: 115px minmax(0, 1fr); }
.ptree { border-right: 1px solid #232323; overflow: hidden; }
.ptree li { padding-left: 3px; }
.ptree .tri { margin-right: 5px; }
.ptree svg { margin-right: 4px; }
.ptree b { margin-left: 1px; }
.ptree .p1 { padding-left: 17px; }
.ptree .q { padding-left: 31px; }
.ptree .gap { height: 15px; }
.ptree .cur { background: #4d4d4d; }
.ptree .cur svg { margin-right: 2px; }
.fav { color: #fdc21a; }
.files { min-width: 0; display: flex; flex-direction: column; background: #333; }
.crumb { height: 21px; padding: 2px 4px; background: #3e3e3e; border-bottom: 1px solid #262626; font-weight: 600; }
.grid { flex: 1; display: flex; flex-wrap: wrap; align-content: flex-start; padding: 22px 9px; }
.grid li { width: 76px; display: flex; flex-direction: column; align-items: center; gap: 12px; font-size: 10px; }
.grid svg { width: 48px; height: 40px; }
.foot { height: 21px; display: flex; align-items: center; justify-content: flex-end; padding-right: 16px; background: #3c3c3c; border-top: 1px solid #262626; }
.foot input { width: 56px; }

/* inspector */
.scroller { flex: 1; min-height: 0; display: grid; grid-template-columns: minmax(0, 1fr) 12px; }
.props { min-height: 0; overflow: hidden; border-right: 1px solid #303030; }
.prop { height: 20px; display: grid; grid-template-columns: 121px minmax(0, 1fr); align-items: center; white-space: nowrap; }
.prop > :first-child { overflow: hidden; }
.prop.in > :first-child { padding-left: 15px; }
.image-part { height: 53px; padding: 0 7px 7px 37px; display: flex; flex-direction: column; justify-content: flex-end; overflow: hidden; }
.image-part .prop { grid-template-columns: 106px minmax(0, 1fr); flex: none; }
.txt { width: 100%; height: 18px; padding: 0 2px; background: #282828; border: 1px solid #202020; border-radius: 3px; }
.tick { width: 14px; height: 14px; display: grid; }
.tick input { grid-area: 1 / 1; appearance: none; width: 14px; height: 14px; background: #282828; border: 1px solid #1c1c1c; border-radius: 2px; }
.tick svg { grid-area: 1 / 1; width: 10px; height: 10px; place-self: center; color: #eee; pointer-events: none; }
.comp-head { height: 22px; display: flex; align-items: center; padding: 1px 11px 0 6px; background: #3e3e3e; border-top: 1px solid #1c1c1c; border-bottom: 1px solid #303030; }
.comp-head .tri { margin-right: 7px; }
.comp-head .tick { margin: 0 6px; }
.comp-head .push { margin-left: auto; }
.comp-head .push ~ svg { margin-left: 10px; }
.button-part { padding: 4px 4px 10px 19px; }
.obj { height: 17px; min-width: 0; display: flex; align-items: center; gap: 1px; padding-left: 2px; background: #282828; border: 1px solid #202020; border-radius: 3px; overflow: hidden; }
.obj em { flex: 1; min-width: 0; overflow: hidden; white-space: nowrap; color: #d2d2d2; }
.obj button { flex: none; width: 17px; height: 15px; background: #353535; }
.color { height: 18px; display: flex; border: 1px solid #202020; border-radius: 2px; }
.color .sw { flex: 1; border-bottom: 3px solid #fff; }
.color button { flex: none; width: 17px; }
.white { background: #fff; } .pale { background: #f4f4f4; } .gray { background: #c8c8c8; }
.color .half { border-image: linear-gradient(90deg, #fff 50%, #000 50%) 3; border-style: solid; border-width: 0 0 3px; }
.mult { display: grid; grid-template-columns: minmax(0, 1fr) 50px; gap: 5px; align-items: center; }
.prop.nav { margin-top: 8px; }
.prop.visual { height: 21px; align-items: end; }
.raised { height: 18px; background: #585858; border: 1px solid #303030; border-radius: 3px; color: #eee; }
.events { margin: 10px 0 0 -1px; border: 1px solid #232323; border-radius: 3px 3px 0 3px; background: #414141; }
.ev-head { height: 19px; padding: 1px 7px; background: #353535; border-bottom: 1px solid #232323; margin-bottom: 4px; }
.ev { display: grid; grid-template-columns: 86px minmax(0, 1fr); gap: 3px 5px; padding: 3px 6px 8px; }
.ev.lit { background: #4d4d4d; }
.ev .obj { height: 18px; }
.ev .tick { margin-top: 1px; }
.ev-foot { width: 58px; height: 20px; margin: -1px 9px 0 auto; display: flex; justify-content: center; gap: 16px; background: #414141; border: 1px solid #232323; border-top: 0; border-radius: 0 0 3px 3px; }
.material { height: 56px; display: grid; grid-template-columns: 24px minmax(0, 1fr); gap: 9px; padding: 6px 4px 4px 20px; position: relative; background: #3c3c3c; border-top: 1px solid #1c1c1c; border-bottom: 1px solid #1c1c1c; }
.thumb { width: 24px; height: 24px; margin-top: 4px; background: #fff; }
.mat-title { display: flex; align-items: center; gap: 11px; padding: 0 2px 0 3px; font-size: 13px; color: #a8a8a8; }
.mat-title span { flex: 1; }
.mat-shader { display: grid; grid-template-columns: 47px minmax(0, 1fr) 43px; gap: 4px; align-items: center; margin-top: 7px; color: #7c7c7c; }
.mat-shader label { white-space: nowrap; }
.mat-shader button { height: 17px; background: #454545; border-radius: 3px; color: #999; }
.corner { position: absolute; left: 6px; bottom: 6px; }
.strip { height: 11px; border-bottom: 1px solid #1c1c1c; }
.addcomp { display: flex; justify-content: center; padding: 8px 0; }
.addcomp .raised { width: 230px; height: 24px; }
.scrollbar { display: flex; flex-direction: column; align-items: center; padding: 5px 0; }
.thumb-v { width: 10px; height: 307px; flex: none; margin: auto 0 7px; border-radius: 5px; background: #5e5e5e; }
.pv-head { flex: none; height: 22px; display: flex; align-items: center; background: #3c3c3c; border-top: 1px solid #232323; border-bottom: 1px solid #232323; padding: 0 5px 0 4px; }
.pv-head button { height: 20px; gap: 3px; padding: 1px 4px 0 3px; border-left: 1px solid #232323; border-right: 1px solid #232323; font-weight: 600; }
.grip { flex: 1; height: 4px; margin: 0 10px 0 4px; border-top: 1px solid #5c5c5c; border-bottom: 1px solid #5c5c5c; }
.preview { flex: none; height: 153px; display: flex; justify-content: center; background: #313131; }
.tex { width: 154px; overflow: hidden; display: grid; justify-items: center; background: repeating-conic-gradient(#666 0 25%, #484848 0 50%) 13px 13px / 32px 32px; }
.tex > * { grid-area: 1 / 1; }
.blob { width: 126px; height: 126px; margin-top: 14px; border-radius: 36px; background: linear-gradient(#fff 12px, #f4f4f4 18px); box-shadow: 0 0 6px 3px #1c1c1c; filter: blur(1px); }
.tex .guides, .tex p { position: relative; }
.tex p { align-self: end; margin: 0 0 3px; line-height: 15px; text-align: center; font-weight: 500; color: #e8e8e8; text-shadow: 0 1px 2px #000, 0 1px 1px #000, 1px 1px 1px #000; }
.pv-foot { flex: none; height: 7px; background: #3c3c3c; border-top: 1px solid #1c1c1c; }

/* status bar */
.status { flex: none; height: 21px; display: flex; justify-content: flex-end; padding-right: 1px; }
.status button { width: 26px; border-left: 1px solid #2a2a2a; }
```
